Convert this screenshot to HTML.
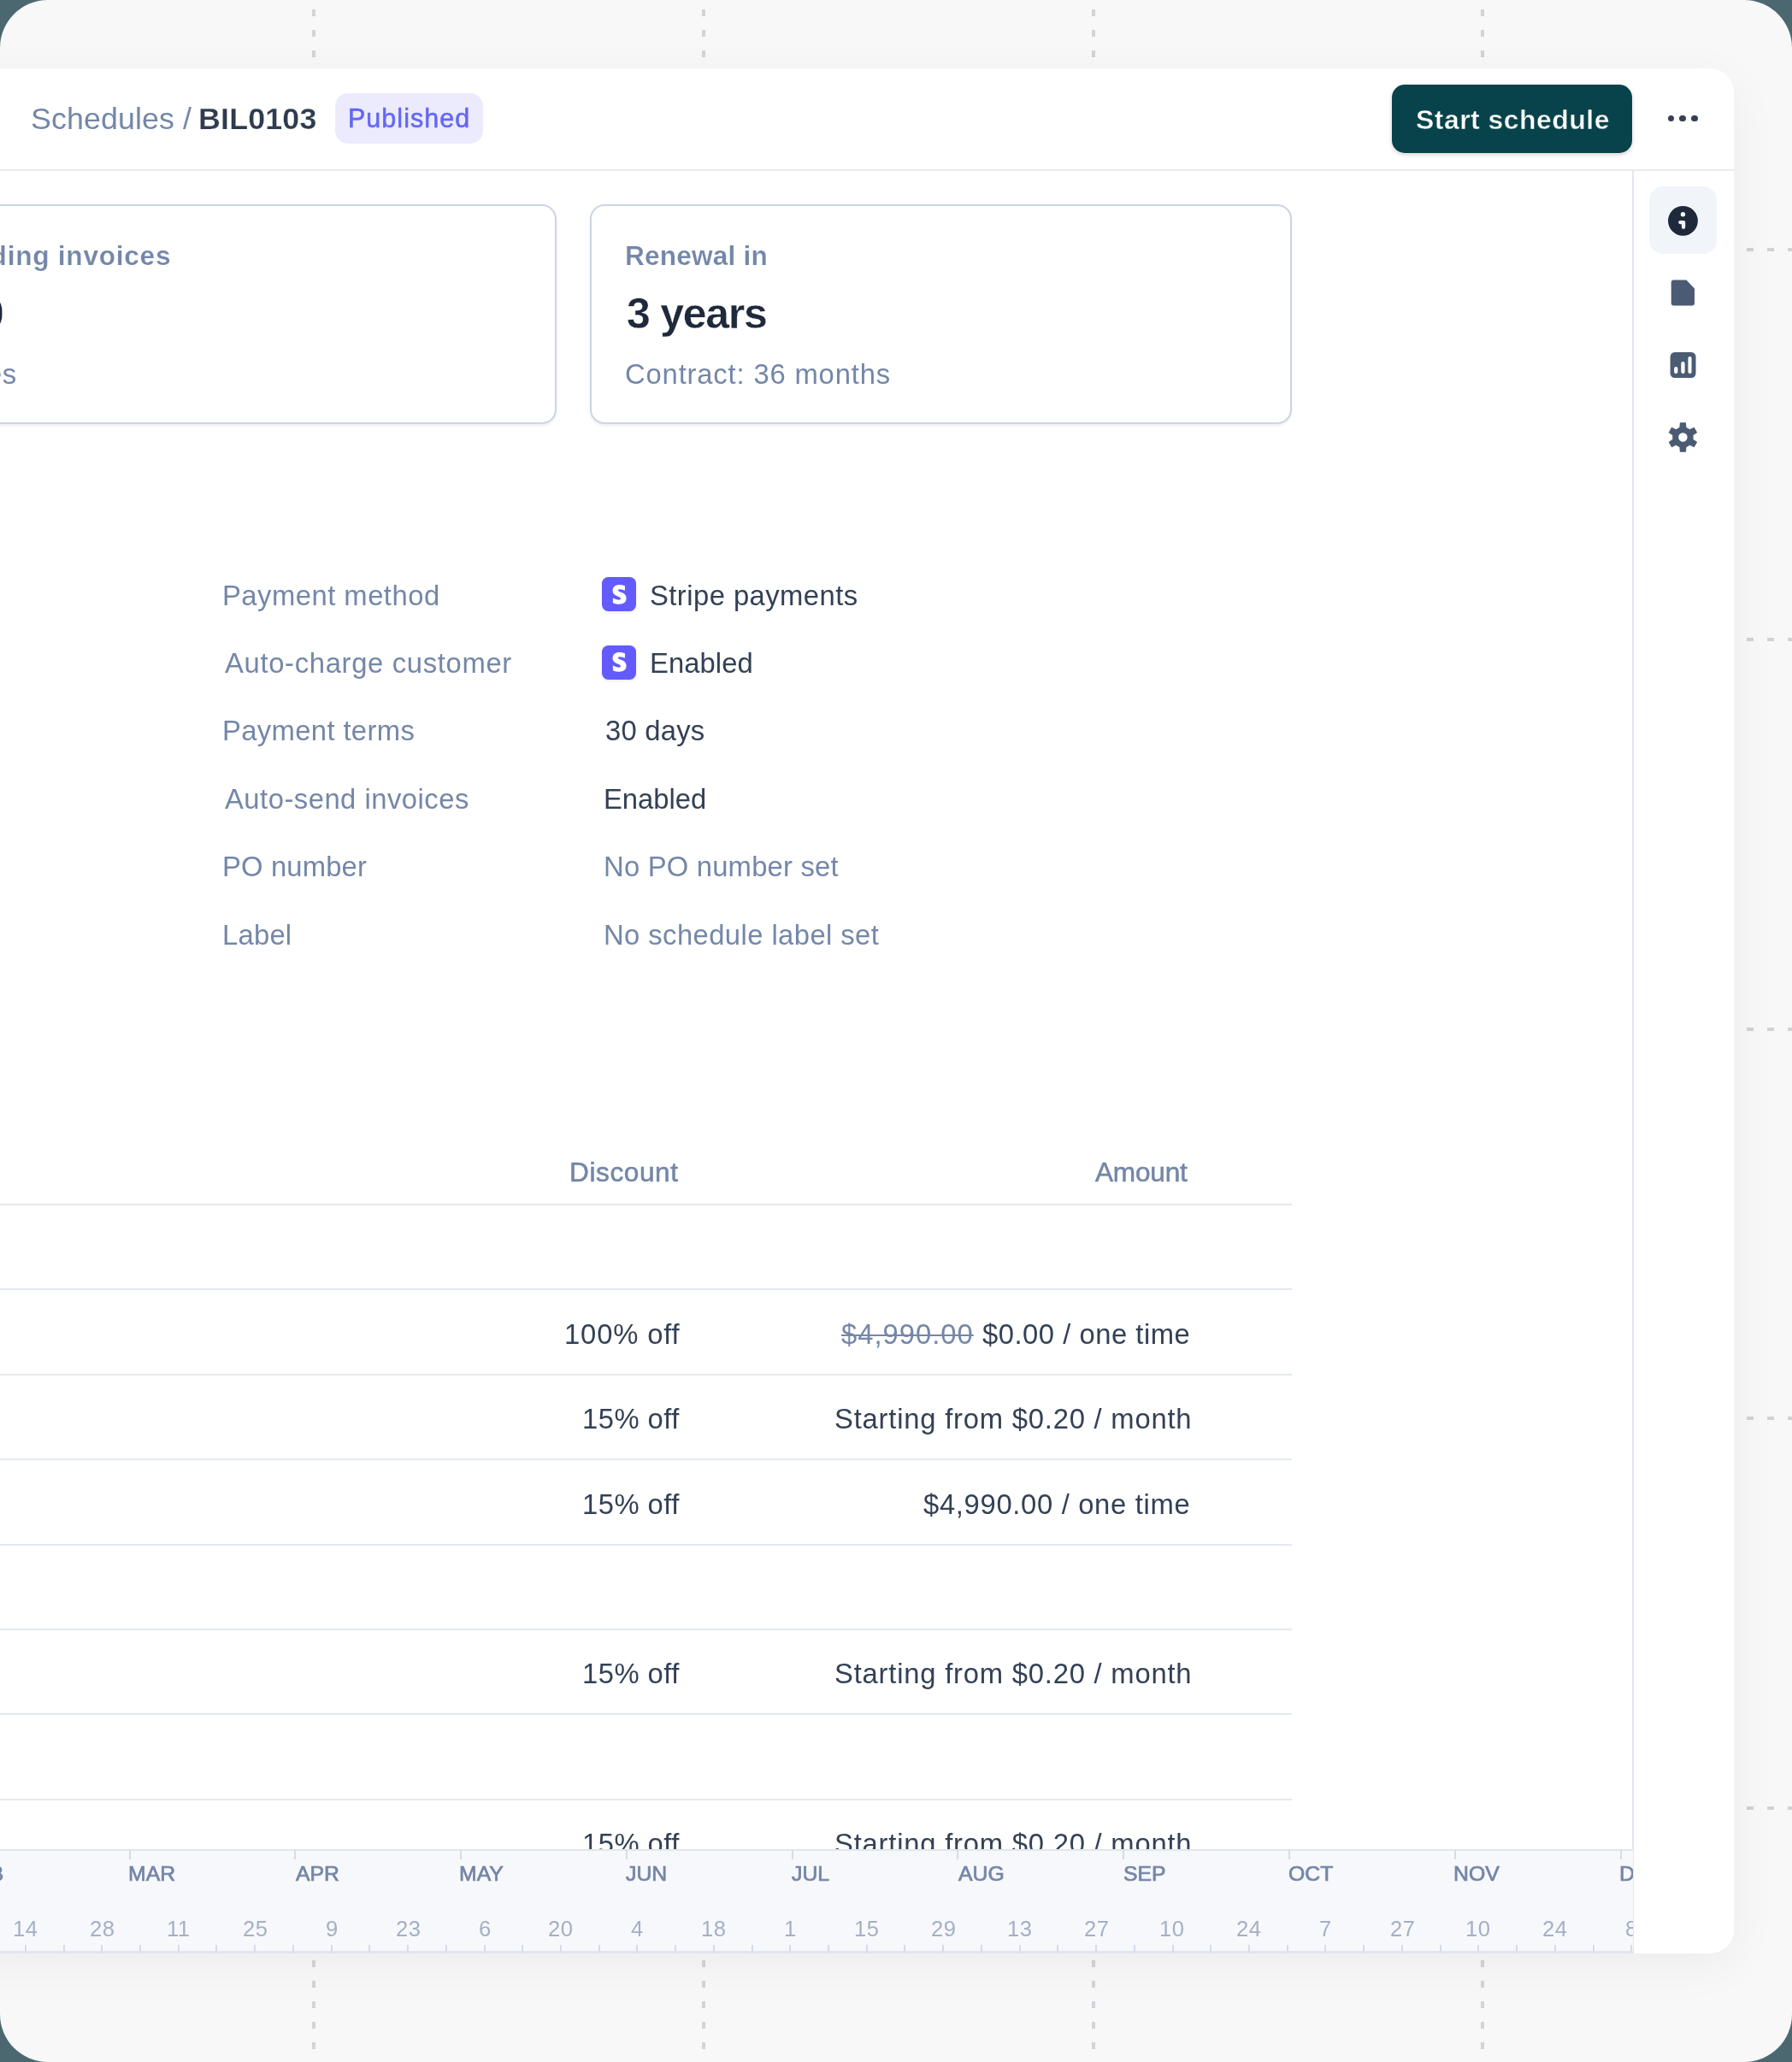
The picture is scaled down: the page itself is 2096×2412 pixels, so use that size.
<!DOCTYPE html>
<html lang="en"><head><meta charset="utf-8"><title>Schedules / BIL0103</title>
<style>
html,body{margin:0;padding:0}
body{width:2096px;height:2412px;overflow:hidden;background:#4b6871;font-family:"Liberation Sans",sans-serif;position:relative}
.abs{position:absolute}
.frame{position:absolute;left:0;top:0;width:2096px;height:2412px;border-radius:56px;background:#f8f8f8;overflow:hidden}
.panel{position:absolute;left:-40px;top:80px;width:2068px;height:2204.5px;background:#fff;border-radius:0 28px 28px 0;box-shadow:0 14px 56px rgba(0,0,0,0.05);overflow:hidden}
.inner{position:absolute;left:40px;top:-80px;width:2096px;height:2412px}
.t,.mo,.dy{will-change:transform}
.t{position:absolute;white-space:pre;line-height:1}
.hl{position:absolute;height:2px;background:#e3e8f0}
.vd{position:absolute;width:4px;height:8px;background:#d3d4d8}
.hd{position:absolute;width:8px;height:4px;background:#d1d2d6}
.card{position:absolute;box-sizing:border-box;border:2px solid #cdd5e3;border-radius:17px;background:#fff;box-shadow:0 2px 3px rgba(100,116,139,0.12)}
.sicon{position:absolute;width:39.7px;height:39.7px;border-radius:7.5px;background:#635bff;box-shadow:0 1.5px 3px rgba(0,0,0,0.07)}
.tk{position:absolute;width:2px;background:#d6dce8}
.mo{position:absolute;white-space:pre;line-height:1;font-size:25.7px;font-weight:700;color:#7486a7;letter-spacing:0.2px}
.dy{position:absolute;white-space:pre;line-height:1;font-size:26.2px;color:#a4b0c6;width:80px;text-align:center}
</style></head><body>
<div class="frame">
<div class="vd" style="left:365.10px;top:11px"></div>
<div class="vd" style="left:365.10px;top:35px"></div>
<div class="vd" style="left:365.10px;top:59px"></div>
<div class="vd" style="left:365.10px;top:2293px"></div>
<div class="vd" style="left:365.10px;top:2317px"></div>
<div class="vd" style="left:365.10px;top:2341px"></div>
<div class="vd" style="left:365.10px;top:2365px"></div>
<div class="vd" style="left:365.10px;top:2389px"></div>
<div class="vd" style="left:820.85px;top:11px"></div>
<div class="vd" style="left:820.85px;top:35px"></div>
<div class="vd" style="left:820.85px;top:59px"></div>
<div class="vd" style="left:820.85px;top:2293px"></div>
<div class="vd" style="left:820.85px;top:2317px"></div>
<div class="vd" style="left:820.85px;top:2341px"></div>
<div class="vd" style="left:820.85px;top:2365px"></div>
<div class="vd" style="left:820.85px;top:2389px"></div>
<div class="vd" style="left:1276.60px;top:11px"></div>
<div class="vd" style="left:1276.60px;top:35px"></div>
<div class="vd" style="left:1276.60px;top:59px"></div>
<div class="vd" style="left:1276.60px;top:2293px"></div>
<div class="vd" style="left:1276.60px;top:2317px"></div>
<div class="vd" style="left:1276.60px;top:2341px"></div>
<div class="vd" style="left:1276.60px;top:2365px"></div>
<div class="vd" style="left:1276.60px;top:2389px"></div>
<div class="vd" style="left:1732.35px;top:11px"></div>
<div class="vd" style="left:1732.35px;top:35px"></div>
<div class="vd" style="left:1732.35px;top:59px"></div>
<div class="vd" style="left:1732.35px;top:2293px"></div>
<div class="vd" style="left:1732.35px;top:2317px"></div>
<div class="vd" style="left:1732.35px;top:2341px"></div>
<div class="vd" style="left:1732.35px;top:2365px"></div>
<div class="vd" style="left:1732.35px;top:2389px"></div>
<div class="hd" style="left:2043.4px;top:290.00px"></div>
<div class="hd" style="left:2067.4px;top:290.00px"></div>
<div class="hd" style="left:2091.4px;top:290.00px"></div>
<div class="hd" style="left:2043.4px;top:745.75px"></div>
<div class="hd" style="left:2067.4px;top:745.75px"></div>
<div class="hd" style="left:2091.4px;top:745.75px"></div>
<div class="hd" style="left:2043.4px;top:1201.50px"></div>
<div class="hd" style="left:2067.4px;top:1201.50px"></div>
<div class="hd" style="left:2091.4px;top:1201.50px"></div>
<div class="hd" style="left:2043.4px;top:1657.25px"></div>
<div class="hd" style="left:2067.4px;top:1657.25px"></div>
<div class="hd" style="left:2091.4px;top:1657.25px"></div>
<div class="hd" style="left:2043.4px;top:2113.00px"></div>
<div class="hd" style="left:2067.4px;top:2113.00px"></div>
<div class="hd" style="left:2091.4px;top:2113.00px"></div>
<div class="panel"><div class="inner">
<div class="hl" style="left:0;top:198.3px;width:2028px;background:#e9ebf0"></div>
<div class="abs" style="left:391.7px;top:109.2px;width:173.4px;height:58.8px;border-radius:15px;background:#ebebfd"></div>
<div class="abs" style="left:1628.2px;top:99.2px;width:280.4px;height:79.4px;border-radius:15px;background:#08434b;box-shadow:0 2px 5px rgba(0,0,0,0.18)"></div>
<div class="abs" style="left:1950.70px;top:134.90px;width:7.6px;height:7.6px;border-radius:50%;background:#334155"></div>
<div class="abs" style="left:1964.40px;top:134.90px;width:7.6px;height:7.6px;border-radius:50%;background:#334155"></div>
<div class="abs" style="left:1978.20px;top:134.90px;width:7.6px;height:7.6px;border-radius:50%;background:#334155"></div>
<div class="card" style="left:-60px;top:238.8px;width:710.6px;height:257px"></div>
<div class="card" style="left:690.4px;top:238.8px;width:821px;height:257px"></div>
<div class="hl" style="left:0;top:1408.00px;width:1511px"></div>
<div class="hl" style="left:0;top:1507.40px;width:1511px"></div>
<div class="hl" style="left:0;top:1606.80px;width:1511px"></div>
<div class="hl" style="left:0;top:1706.20px;width:1511px"></div>
<div class="hl" style="left:0;top:1805.60px;width:1511px"></div>
<div class="hl" style="left:0;top:1905.00px;width:1511px"></div>
<div class="hl" style="left:0;top:2004.40px;width:1511px"></div>
<div class="hl" style="left:0;top:2103.80px;width:1511px"></div>
<div class="sicon" style="left:704.4px;top:675.3px"></div><svg class="abs" style="left:712.53px;top:683.80px" width="22.80" height="22.80" viewBox="0 0 24 24"><path fill="#fff" d="M13.976 9.15C11.804 8.344 10.62 7.724 10.62 6.741C10.62 5.91 11.303 5.436 12.521 5.436C14.748 5.436 17.036 6.294 18.9 7.2L18.9 1.35C17.9.85 15.697 0 12.165 0C9.667 0 7.589.654 6.104 1.872C4.56 3.147 3.757 4.992 3.757 7.218C3.757 11.257 6.224 12.978 10.233 14.437C12.818 15.357 13.678 16.011 13.678 17.02C13.678 18 12.838 18.565 11.324 18.565C9.449 18.565 6.359 17.644 4.1 16.35L4.1 22.3C5.5 23 8.385 24 11.714 24C14.355 24 16.557 23.376 18.042 22.187C19.706 20.882 20.567 18.951 20.567 16.455C20.567 12.327 18.043 10.604 13.973 9.15Z"/></svg>
<div class="sicon" style="left:704.4px;top:754.9px"></div><svg class="abs" style="left:712.53px;top:763.40px" width="22.80" height="22.80" viewBox="0 0 24 24"><path fill="#fff" d="M13.976 9.15C11.804 8.344 10.62 7.724 10.62 6.741C10.62 5.91 11.303 5.436 12.521 5.436C14.748 5.436 17.036 6.294 18.9 7.2L18.9 1.35C17.9.85 15.697 0 12.165 0C9.667 0 7.589.654 6.104 1.872C4.56 3.147 3.757 4.992 3.757 7.218C3.757 11.257 6.224 12.978 10.233 14.437C12.818 15.357 13.678 16.011 13.678 17.02C13.678 18 12.838 18.565 11.324 18.565C9.449 18.565 6.359 17.644 4.1 16.35L4.1 22.3C5.5 23 8.385 24 11.714 24C14.355 24 16.557 23.376 18.042 22.187C19.706 20.882 20.567 18.951 20.567 16.455C20.567 12.327 18.043 10.604 13.973 9.15Z"/></svg>
<div class="t" style="left:35.80px;top:122px;font-size:35.8px;font-weight:400;color:#7487a8;letter-spacing:0.080px;">Schedules /</div>
<div class="t" style="left:232.30px;top:122px;font-size:35.8px;font-weight:700;-webkit-text-stroke:0.25px #ffffff;color:#2f3b4f;letter-spacing:0.167px;">BIL0103</div>
<div class="t" style="left:407.20px;top:123px;font-size:30.5px;font-weight:400;-webkit-text-stroke:0.55px #6467f2;color:#6467f2;letter-spacing:1.025px;">Published</div>
<div class="t" style="left:1655.60px;top:125px;font-size:31.9px;font-weight:700;-webkit-text-stroke:0.41px #08434b;color:#ffffff;letter-spacing:0.508px;">Start schedule</div>
<div class="t" style="left:-136.45px;top:284px;font-size:31.6px;font-weight:700;-webkit-text-stroke:0.22px #ffffff;color:#7487a8;letter-spacing:0.750px;">Outstanding invoices</div>
<div class="t" style="left:-23.20px;top:342px;font-size:50.0px;font-weight:700;-webkit-text-stroke:0.35px #ffffff;color:#1e293b;letter-spacing:0.750px;">0</div>
<div class="t" style="left:-131.65px;top:422px;font-size:32.8px;font-weight:400;color:#7487a8;letter-spacing:0.600px;">0 invoices</div>
<div class="t" style="left:731.10px;top:284px;font-size:31.6px;font-weight:700;-webkit-text-stroke:0.22px #ffffff;color:#7487a8;letter-spacing:0.200px;">Renewal in</div>
<div class="t" style="left:732.70px;top:342px;font-size:50.0px;font-weight:700;-webkit-text-stroke:0.35px #ffffff;color:#1e293b;letter-spacing:-1.267px;">3 years</div>
<div class="t" style="left:731.10px;top:422px;font-size:32.8px;font-weight:400;color:#7487a8;letter-spacing:0.822px;">Contract: 36 months</div>
<div class="t" style="left:259.80px;top:681px;font-size:32.8px;font-weight:400;color:#7487a8;letter-spacing:0.477px;">Payment method</div>
<div class="t" style="left:262.80px;top:760px;font-size:32.8px;font-weight:400;color:#7487a8;letter-spacing:0.663px;">Auto-charge customer</div>
<div class="t" style="left:259.80px;top:839px;font-size:32.8px;font-weight:400;color:#7487a8;letter-spacing:0.358px;">Payment terms</div>
<div class="t" style="left:262.80px;top:919px;font-size:32.8px;font-weight:400;color:#7487a8;letter-spacing:0.482px;">Auto-send invoices</div>
<div class="t" style="left:259.80px;top:998px;font-size:32.8px;font-weight:400;color:#7487a8;letter-spacing:0.150px;">PO number</div>
<div class="t" style="left:259.80px;top:1078px;font-size:32.8px;font-weight:400;color:#7487a8;letter-spacing:0.225px;">Label</div>
<div class="t" style="left:760.20px;top:681px;font-size:32.8px;font-weight:400;color:#334155;letter-spacing:0.443px;">Stripe payments</div>
<div class="t" style="left:759.60px;top:760px;font-size:32.8px;font-weight:400;color:#334155;letter-spacing:0.067px;">Enabled</div>
<div class="t" style="left:707.60px;top:839px;font-size:32.8px;font-weight:400;color:#334155;letter-spacing:0.217px;">30 days</div>
<div class="t" style="left:705.60px;top:919px;font-size:32.8px;font-weight:400;color:#334155;letter-spacing:-0.033px;">Enabled</div>
<div class="t" style="left:705.60px;top:998px;font-size:32.8px;font-weight:400;color:#7487a8;letter-spacing:0.200px;">No PO number set</div>
<div class="t" style="left:705.60px;top:1078px;font-size:32.8px;font-weight:400;color:#7487a8;letter-spacing:0.415px;">No schedule label set</div>
<div class="t" style="left:666.20px;top:1356px;font-size:31.6px;font-weight:400;-webkit-text-stroke:0.57px #7487a8;color:#7487a8;letter-spacing:0.586px;">Discount</div>
<div class="t" style="left:1280.50px;top:1356px;font-size:31.6px;font-weight:400;-webkit-text-stroke:0.57px #7487a8;color:#7487a8;letter-spacing:-0.200px;">Amount</div>
<div class="t" style="left:659.60px;top:1545px;font-size:32.8px;font-weight:400;color:#334155;letter-spacing:0.829px;">100% off</div>
<div class="t" style="left:983.80px;top:1545px;font-size:32.8px;font-weight:400;color:#7487a8;letter-spacing:0.988px;text-decoration:line-through;text-decoration-thickness:2px;">$4,990.00</div>
<div class="t" style="left:1149.20px;top:1545px;font-size:32.8px;font-weight:400;color:#334155;letter-spacing:0.507px;">$0.00 / one time</div>
<div class="t" style="left:680.60px;top:1644px;font-size:32.8px;font-weight:400;color:#334155;letter-spacing:0.467px;">15% off</div>
<div class="t" style="left:975.60px;top:1644px;font-size:32.8px;font-weight:400;color:#334155;letter-spacing:0.777px;">Starting from $0.20 / month</div>
<div class="t" style="left:680.60px;top:1744px;font-size:32.8px;font-weight:400;color:#334155;letter-spacing:0.467px;">15% off</div>
<div class="t" style="left:1080.20px;top:1744px;font-size:32.8px;font-weight:400;color:#334155;letter-spacing:0.663px;">$4,990.00 / one time</div>
<div class="t" style="left:680.60px;top:1942px;font-size:32.8px;font-weight:400;color:#334155;letter-spacing:0.467px;">15% off</div>
<div class="t" style="left:975.60px;top:1942px;font-size:32.8px;font-weight:400;color:#334155;letter-spacing:0.777px;">Starting from $0.20 / month</div>
<div class="t" style="left:680.60px;top:2141px;font-size:32.8px;font-weight:400;color:#334155;letter-spacing:0.467px;">15% off</div>
<div class="t" style="left:975.60px;top:2141px;font-size:32.8px;font-weight:400;color:#334155;letter-spacing:0.777px;">Starting from $0.20 / month</div>
<div class="abs" style="left:1909px;top:199px;width:2px;height:2090px;background:#e1e6f0"></div>
<div class="abs" style="left:1910.5px;top:200px;width:118px;height:2090px;background:#fff"></div>
<div class="abs" style="left:1928.8px;top:218px;width:79.4px;height:79px;border-radius:16px;background:#f1f4f9"></div>
<svg class="abs" style="left:1928px;top:200px" width="100" height="360" viewBox="1928 200 100 360"><circle cx="1968.45" cy="258.3" r="17.4" fill="#1e293b"/><circle cx="1968.45" cy="250.7" r="2.7" fill="#f4f6fa"/><path d="M1965.3 260.1H1969.05V265.8" fill="none" stroke="#f4f6fa" stroke-width="4.3" stroke-linecap="round" stroke-linejoin="round"/><path d="M1957.7 327.4H1972.4L1982 337.6V354.5a3 3 0 0 1-3 3H1957.7a3 3 0 0 1-3-3V330.4a3 3 0 0 1 3-3Z" fill="#4b5b73"/><rect x="1953.6" y="412.1" width="29.9" height="29.8" rx="5.2" fill="#4b5b73"/><rect x="1958.1" y="429.1" width="4.3" height="7.9" rx="2.1" fill="#fff"/><rect x="1966.3" y="423.1" width="4.3" height="13.9" rx="2.1" fill="#fff"/><rect x="1974.45" y="416.9" width="4.1" height="20.1" rx="2" fill="#fff"/><path fill-rule="evenodd" fill="#4b5b73" d="M1964.35 499.99L1964.90 494.20 L1971.90 494.20 L1972.45 499.99A12.20 12.20 0 0 1 1976.34 502.24L1981.63 499.82 L1985.13 505.88 L1980.39 509.25A12.20 12.20 0 0 1 1980.39 513.75L1985.13 517.12 L1981.63 523.18 L1976.34 520.76A12.20 12.20 0 0 1 1972.45 523.01L1971.90 528.80 L1964.90 528.80 L1964.35 523.01A12.20 12.20 0 0 1 1960.46 520.76L1955.17 523.18 L1951.67 517.12 L1956.41 513.75A12.20 12.20 0 0 1 1956.41 509.25L1951.67 505.88 L1955.17 499.82 L1960.46 502.24A12.20 12.20 0 0 1 1964.35 499.99 ZM1963.20 511.50 a5.20 5.20 0 1 0 10.40 0 a5.20 5.20 0 1 0 -10.40 0Z"/></svg>
<div class="abs" style="left:0;top:2163px;width:1910px;height:122px;background:#f7f8fb;overflow:hidden">
<div class="hl" style="left:0;top:0;width:1910px;background:#e0e5ee"></div>
<div class="hl" style="left:0;top:119.3px;width:1910px;height:2.4px;background:#e1e6ef"></div>
<div class="tk" style="left:-43.17px;top:1px;height:10.5px"></div>
<div class="tk" style="left:150.60px;top:1px;height:10.5px"></div>
<div class="tk" style="left:344.37px;top:1px;height:10.5px"></div>
<div class="tk" style="left:538.14px;top:1px;height:10.5px"></div>
<div class="tk" style="left:731.91px;top:1px;height:10.5px"></div>
<div class="tk" style="left:925.68px;top:1px;height:10.5px"></div>
<div class="tk" style="left:1119.45px;top:1px;height:10.5px"></div>
<div class="tk" style="left:1313.22px;top:1px;height:10.5px"></div>
<div class="tk" style="left:1506.99px;top:1px;height:10.5px"></div>
<div class="tk" style="left:1700.76px;top:1px;height:10.5px"></div>
<div class="tk" style="left:1894.53px;top:1px;height:10.5px"></div>
<div class="tk" style="left:-15.93px;top:111.8px;height:9px"></div>
<div class="tk" style="left:28.80px;top:111.8px;height:9px"></div>
<div class="tk" style="left:73.53px;top:111.8px;height:9px"></div>
<div class="tk" style="left:118.25px;top:111.8px;height:9px"></div>
<div class="tk" style="left:162.98px;top:111.8px;height:9px"></div>
<div class="tk" style="left:207.70px;top:111.8px;height:9px"></div>
<div class="tk" style="left:252.43px;top:111.8px;height:9px"></div>
<div class="tk" style="left:297.15px;top:111.8px;height:9px"></div>
<div class="tk" style="left:341.88px;top:111.8px;height:9px"></div>
<div class="tk" style="left:386.60px;top:111.8px;height:9px"></div>
<div class="tk" style="left:431.33px;top:111.8px;height:9px"></div>
<div class="tk" style="left:476.05px;top:111.8px;height:9px"></div>
<div class="tk" style="left:520.77px;top:111.8px;height:9px"></div>
<div class="tk" style="left:565.50px;top:111.8px;height:9px"></div>
<div class="tk" style="left:610.23px;top:111.8px;height:9px"></div>
<div class="tk" style="left:654.95px;top:111.8px;height:9px"></div>
<div class="tk" style="left:699.67px;top:111.8px;height:9px"></div>
<div class="tk" style="left:744.40px;top:111.8px;height:9px"></div>
<div class="tk" style="left:789.12px;top:111.8px;height:9px"></div>
<div class="tk" style="left:833.85px;top:111.8px;height:9px"></div>
<div class="tk" style="left:878.57px;top:111.8px;height:9px"></div>
<div class="tk" style="left:923.30px;top:111.8px;height:9px"></div>
<div class="tk" style="left:968.02px;top:111.8px;height:9px"></div>
<div class="tk" style="left:1012.75px;top:111.8px;height:9px"></div>
<div class="tk" style="left:1057.47px;top:111.8px;height:9px"></div>
<div class="tk" style="left:1102.20px;top:111.8px;height:9px"></div>
<div class="tk" style="left:1146.92px;top:111.8px;height:9px"></div>
<div class="tk" style="left:1191.65px;top:111.8px;height:9px"></div>
<div class="tk" style="left:1236.38px;top:111.8px;height:9px"></div>
<div class="tk" style="left:1281.10px;top:111.8px;height:9px"></div>
<div class="tk" style="left:1325.83px;top:111.8px;height:9px"></div>
<div class="tk" style="left:1370.55px;top:111.8px;height:9px"></div>
<div class="tk" style="left:1415.28px;top:111.8px;height:9px"></div>
<div class="tk" style="left:1460.00px;top:111.8px;height:9px"></div>
<div class="tk" style="left:1504.72px;top:111.8px;height:9px"></div>
<div class="tk" style="left:1549.45px;top:111.8px;height:9px"></div>
<div class="tk" style="left:1594.17px;top:111.8px;height:9px"></div>
<div class="tk" style="left:1638.90px;top:111.8px;height:9px"></div>
<div class="tk" style="left:1683.62px;top:111.8px;height:9px"></div>
<div class="tk" style="left:1728.35px;top:111.8px;height:9px"></div>
<div class="tk" style="left:1773.08px;top:111.8px;height:9px"></div>
<div class="tk" style="left:1817.80px;top:111.8px;height:9px"></div>
<div class="tk" style="left:1862.53px;top:111.8px;height:9px"></div>
<div class="tk" style="left:1907.25px;top:111.8px;height:9px"></div>
<div class="tk" style="left:1951.97px;top:111.8px;height:9px"></div>
</div>
<div class="abs" style="left:0;top:2163px;width:1910px;height:122px;overflow:hidden"><div class="abs" style="left:0;top:-2163px">
<div class="t" style="left:-43.87px;top:2180px;font-size:24.8px;font-weight:400;-webkit-text-stroke:0.74px #7486a7;color:#7486a7;letter-spacing:0.000px;">FEB</div>
<div class="t" style="left:149.90px;top:2180px;font-size:24.8px;font-weight:400;-webkit-text-stroke:0.74px #7486a7;color:#7486a7;letter-spacing:0.000px;">MAR</div>
<div class="t" style="left:345.67px;top:2180px;font-size:24.8px;font-weight:400;-webkit-text-stroke:0.74px #7486a7;color:#7486a7;letter-spacing:0.000px;">APR</div>
<div class="t" style="left:537.44px;top:2180px;font-size:24.8px;font-weight:400;-webkit-text-stroke:0.74px #7486a7;color:#7486a7;letter-spacing:0.000px;">MAY</div>
<div class="t" style="left:732.21px;top:2180px;font-size:24.8px;font-weight:400;-webkit-text-stroke:0.74px #7486a7;color:#7486a7;letter-spacing:0.000px;">JUN</div>
<div class="t" style="left:925.98px;top:2180px;font-size:24.8px;font-weight:400;-webkit-text-stroke:0.74px #7486a7;color:#7486a7;letter-spacing:0.000px;">JUL</div>
<div class="t" style="left:1120.75px;top:2180px;font-size:24.8px;font-weight:400;-webkit-text-stroke:0.74px #7486a7;color:#7486a7;letter-spacing:0.000px;">AUG</div>
<div class="t" style="left:1313.52px;top:2180px;font-size:24.8px;font-weight:400;-webkit-text-stroke:0.74px #7486a7;color:#7486a7;letter-spacing:0.000px;">SEP</div>
<div class="t" style="left:1507.29px;top:2180px;font-size:24.8px;font-weight:400;-webkit-text-stroke:0.74px #7486a7;color:#7486a7;letter-spacing:0.000px;">OCT</div>
<div class="t" style="left:1700.06px;top:2180px;font-size:24.8px;font-weight:400;-webkit-text-stroke:0.74px #7486a7;color:#7486a7;letter-spacing:0.000px;">NOV</div>
<div class="t" style="left:1893.83px;top:2180px;font-size:24.8px;font-weight:400;-webkit-text-stroke:0.74px #7486a7;color:#7486a7;letter-spacing:0.000px;">DEC</div>
<div class="t" style="left:-73.90px;top:2244px;font-size:25.6px;font-weight:400;color:#a4b0c6;letter-spacing:0.500px;">31</div>
<div class="t" style="left:14.55px;top:2244px;font-size:25.6px;font-weight:400;color:#a4b0c6;letter-spacing:0.500px;">14</div>
<div class="t" style="left:105.00px;top:2244px;font-size:25.6px;font-weight:400;color:#a4b0c6;letter-spacing:0.500px;">28</div>
<div class="t" style="left:194.95px;top:2244px;font-size:25.6px;font-weight:400;color:#a4b0c6;letter-spacing:0.500px;">11</div>
<div class="t" style="left:283.90px;top:2244px;font-size:25.6px;font-weight:400;color:#a4b0c6;letter-spacing:0.500px;">25</div>
<div class="t" style="left:380.60px;top:2244px;font-size:25.6px;font-weight:400;color:#a4b0c6;letter-spacing:0.500px;">9</div>
<div class="t" style="left:462.80px;top:2244px;font-size:25.6px;font-weight:400;color:#a4b0c6;letter-spacing:0.500px;">23</div>
<div class="t" style="left:559.50px;top:2244px;font-size:25.6px;font-weight:400;color:#a4b0c6;letter-spacing:0.500px;">6</div>
<div class="t" style="left:641.20px;top:2244px;font-size:25.6px;font-weight:400;color:#a4b0c6;letter-spacing:0.500px;">20</div>
<div class="t" style="left:737.90px;top:2244px;font-size:25.6px;font-weight:400;color:#a4b0c6;letter-spacing:0.500px;">4</div>
<div class="t" style="left:820.10px;top:2244px;font-size:25.6px;font-weight:400;color:#a4b0c6;letter-spacing:0.500px;">18</div>
<div class="t" style="left:916.80px;top:2244px;font-size:25.6px;font-weight:400;color:#a4b0c6;letter-spacing:0.500px;">1</div>
<div class="t" style="left:999.00px;top:2244px;font-size:25.6px;font-weight:400;color:#a4b0c6;letter-spacing:0.500px;">15</div>
<div class="t" style="left:1088.95px;top:2244px;font-size:25.6px;font-weight:400;color:#a4b0c6;letter-spacing:0.500px;">29</div>
<div class="t" style="left:1177.90px;top:2244px;font-size:25.6px;font-weight:400;color:#a4b0c6;letter-spacing:0.500px;">13</div>
<div class="t" style="left:1267.85px;top:2244px;font-size:25.6px;font-weight:400;color:#a4b0c6;letter-spacing:0.500px;">27</div>
<div class="t" style="left:1356.30px;top:2244px;font-size:25.6px;font-weight:400;color:#a4b0c6;letter-spacing:0.500px;">10</div>
<div class="t" style="left:1446.25px;top:2244px;font-size:25.6px;font-weight:400;color:#a4b0c6;letter-spacing:0.500px;">24</div>
<div class="t" style="left:1543.45px;top:2244px;font-size:25.6px;font-weight:400;color:#a4b0c6;letter-spacing:0.500px;">7</div>
<div class="t" style="left:1625.65px;top:2244px;font-size:25.6px;font-weight:400;color:#a4b0c6;letter-spacing:0.500px;">27</div>
<div class="t" style="left:1714.10px;top:2244px;font-size:25.6px;font-weight:400;color:#a4b0c6;letter-spacing:0.500px;">10</div>
<div class="t" style="left:1804.05px;top:2244px;font-size:25.6px;font-weight:400;color:#a4b0c6;letter-spacing:0.500px;">24</div>
<div class="t" style="left:1901.25px;top:2244px;font-size:25.6px;font-weight:400;color:#a4b0c6;letter-spacing:0.500px;">8</div>
</div></div>
</div></div>
</div></body></html>
